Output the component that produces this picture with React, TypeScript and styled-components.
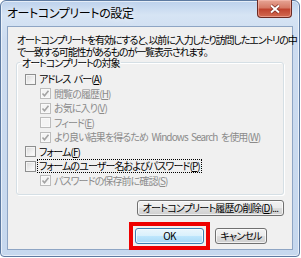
import { FC, ReactNode } from "react";
import { styled, createGlobalStyle } from "styled-components";

const GlobalStyle = createGlobalStyle`
	html, body {
		margin: 0;
		padding: 0;
		background: #ffffff;
	}
	body {
		width: 301px;
		height: 258px;
		overflow: hidden;
		font-family: "Noto Sans CJK JP", "Noto Sans", sans-serif;
	}
`;

type CheckProps = {
	label: ReactNode;
	checked?: boolean;
	disabled?: boolean;
	nested?: boolean;
	focused?: boolean;
};

const CheckRow: FC<CheckProps> = ({ label, checked, disabled, nested, focused }) => {
	return (
		<Row $nested={nested}>
			<Box $disabled={disabled}>
				{checked && (
					<svg width="9" height="9" viewBox="0 0 9 9">
						<path
							d="M1.5 4.5 L3.5 6.8 L7.5 1.8"
							fill="none"
							stroke={disabled ? "#a3a3a3" : "#4a5f97"}
							strokeWidth="1.6"
						/>
					</svg>
				)}
			</Box>
			<Label $disabled={disabled} $focused={focused}>
				{label}
			</Label>
		</Row>
	);
};

const App: FC = () => {
	return (
		<>
			<GlobalStyle />
			<Window>
				<TitleBar>
					<Title>オートコンプリートの設定</Title>
					<CloseButton>
						<svg width="12" height="10" viewBox="0 0 12 10">
							<path d="M2 1.5 L10 8.5 M10 1.5 L2 8.5" stroke="#7a2a22" strokeWidth="3.4" />
							<path d="M2 1.5 L10 8.5 M10 1.5 L2 8.5" stroke="#ffffff" strokeWidth="2" />
						</svg>
					</CloseButton>
				</TitleBar>
				<Client>
					<Description>
						<span>オートコンプリートを有効にすると、以前に入力したり訪問したエントリの中</span>
						<span>で一致する可能性があるものが一覧表示されます。</span>
					</Description>
					<Group>
						<Legend>オートコンプリートの対象</Legend>
						<CheckRow label={<>アドレス バー(<u>A</u>)</>} />
						<CheckRow nested checked disabled label={<>閲覧の履歴(<u>H</u>)</>} />
						<CheckRow nested checked disabled label={<>お気に入り(<u>V</u>)</>} />
						<CheckRow nested disabled label={<>フィード(<u>E</u>)</>} />
						<CheckRow
							nested
							checked
							disabled
							label={<>より良い結果を得るため Windows Search を使用(<u>W</u>)</>}
						/>
						<CheckRow label={<>フォーム(<u>F</u>)</>} />
						<CheckRow focused label={<>フォームのユーザー名およびパスワード(<u>P</u>)</>} />
						<CheckRow nested checked disabled label={<>パスワードの保存前に確認(<u>S</u>)</>} />
					</Group>
					<ActionRow>
						<Button $width={147}>
							オートコンプリート履歴の削除(<u>D</u>)...
						</Button>
					</ActionRow>
					<Footer>
						<Highlight>
							<Button $width={69} $primary>
								OK
							</Button>
						</Highlight>
						<Button $width={52}>キャンセル</Button>
					</Footer>
				</Client>
			</Window>
		</>
	);
};

const Window = styled.div`
	box-sizing: border-box;
	width: 300px;
	height: 257px;
	display: flex;
	flex-direction: column;
	border: 1px solid #5d7aa1;
	border-radius: 6px 6px 4px 4px;
	background: linear-gradient(to bottom, #bcd1ec 0px, #d6e4f4 14px, #cddcf0 40px, #c6d8ee 100%);
	box-shadow: inset 0 0 0 1px rgba(255, 255, 255, 0.6);
`;

const TitleBar = styled.div`
	height: 25px;
	display: flex;
	align-items: flex-start;
	justify-content: space-between;
	padding-left: 6px;
	padding-right: 7px;
`;

const Title = styled.div`
	margin-top: 5px;
	font-size: 12px;
	line-height: 14px;
	color: #000000;
	font-feature-settings: "palt";
	letter-spacing: -0.4px;
	text-shadow: 0 0 6px rgba(255, 255, 255, 0.9);
`;

const CloseButton = styled.div`
	box-sizing: border-box;
	width: 35px;
	height: 18px;
	margin-top: -1px;
	display: flex;
	align-items: center;
	justify-content: center;
	border: 1px solid #6b2a23;
	border-top: none;
	border-radius: 0 0 4px 4px;
	background: linear-gradient(to bottom, #e6a595 0%, #d67a66 45%, #c0442f 55%, #d26b52 100%);
	box-shadow: inset 0 0 0 1px rgba(255, 200, 190, 0.5);
`;

const Client = styled.div`
	flex: 1;
	margin: 0 6px 6px 6px;
	display: flex;
	flex-direction: column;
	border: 1px solid #8ea5c4;
	background: #f0f0f0;
	font-size: 10px;
	color: #000000;
`;

const Description = styled.div`
	display: flex;
	flex-direction: column;
	padding: 7px 0 0 9px;
	line-height: 11.5px;
	font-feature-settings: "palt";
	letter-spacing: -1.1px;
	white-space: nowrap;
`;

const Group = styled.fieldset`
	margin: 0 8px 0 8px;
	padding: 4px 0 6px 8px;
	min-inline-size: 0;
	border: 1px solid #d5dfe5;
	border-radius: 3px;
	box-shadow: inset 1px 1px 0 #ffffff, 1px 1px 0 #ffffff;
`;

const Legend = styled.legend`
	margin-left: -5px;
	padding: 0 2px;
	line-height: 11px;
	font-feature-settings: "palt";
	letter-spacing: -1px;
	white-space: nowrap;
`;

const Row = styled.div<{ $nested?: boolean }>`
	height: 14.5px;
	display: flex;
	align-items: center;
	gap: 2px;
	padding-left: ${(p) => (p.$nested ? 15 : 0)}px;
`;

const Box = styled.span<{ $disabled?: boolean }>`
	box-sizing: border-box;
	width: 11px;
	height: 11px;
	flex: none;
	display: flex;
	align-items: center;
	justify-content: center;
	border: 1px solid ${(p) => (p.$disabled ? "#bcbcbc" : "#8e8f8f")};
	background: ${(p) =>
		p.$disabled ? "#f4f4f4" : "linear-gradient(135deg, #d8d8d8 0%, #f4f4f4 70%, #ffffff 100%)"};
	box-shadow: inset 0 0 0 1px ${(p) => (p.$disabled ? "#f9f9f9" : "#f4f4f4")};
`;

const Label = styled.span<{ $disabled?: boolean; $focused?: boolean }>`
	padding: 0 1px;
	line-height: 12px;
	white-space: nowrap;
	font-feature-settings: "palt";
	letter-spacing: -0.9px;
	word-spacing: 2px;
	color: ${(p) => (p.$disabled ? "#8b8b8b" : "#000000")};
	outline: ${(p) => (p.$focused ? "1px dotted #000000" : "none")};

	u {
		text-underline-offset: 1px;
	}
`;

const ActionRow = styled.div`
	display: flex;
	justify-content: flex-end;
	padding: 5px 8px 0 0;
`;

const Footer = styled.div`
	display: flex;
	justify-content: flex-end;
	gap: 11px;
	padding: 12px 25px 0 0;
`;

const Highlight = styled.div`
	margin: -6px;
	padding: 2px;
	border: 4px solid #ee0000;
	display: flex;
`;

const Button = styled.button<{ $width: number; $primary?: boolean }>`
	box-sizing: border-box;
	width: ${(p) => p.$width}px;
	height: 16px;
	padding: 0;
	font-family: inherit;
	font-size: 10px;
	line-height: 14px;
	color: #000000;
	white-space: nowrap;
	font-feature-settings: "palt";
	letter-spacing: -0.8px;
	border: 1px solid ${(p) => (p.$primary ? "#3c7fb1" : "#707070")};
	border-radius: 3px;
	background: ${(p) =>
		p.$primary
			? "linear-gradient(to bottom, #eaf6fd 0%, #d9f0fc 50%, #bee6fd 51%, #a7d9f5 100%)"
			: "linear-gradient(to bottom, #f2f2f2 0%, #ebebeb 50%, #dddddd 51%, #cfcfcf 100%)"};
	box-shadow: inset 0 0 0 1px rgba(255, 255, 255, 0.7);

	u {
		text-underline-offset: 1px;
	}
`;

export default App;
